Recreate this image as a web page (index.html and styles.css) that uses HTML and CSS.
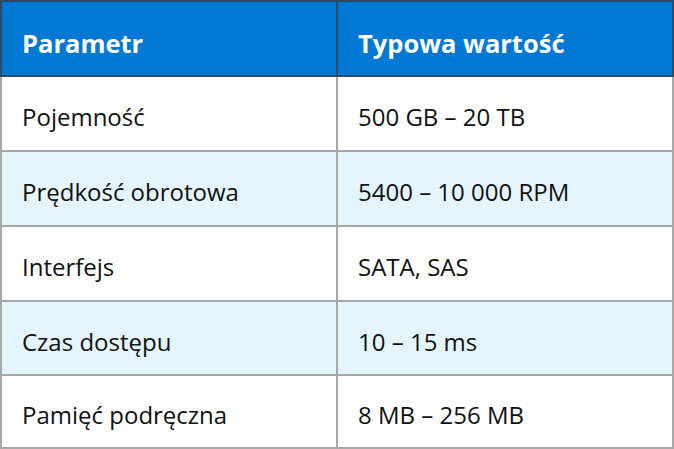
FILE: index.html
```html
<!DOCTYPE html>
<html lang="pl">
<head>
<meta charset="utf-8">
<link rel="stylesheet" href="styles.css">
</head>
<body>
<table class="spec">
  <thead>
    <tr><th>Parametr</th><th>Typowa wartość</th></tr>
  </thead>
  <tbody>
    <tr><td>Pojemność</td><td>500 GB – 20 TB</td></tr>
    <tr class="alt"><td>Prędkość obrotowa</td><td>5400 – 10 000 RPM</td></tr>
    <tr><td>Interfejs</td><td>SATA, SAS</td></tr>
    <tr class="alt short"><td>Czas dostępu</td><td>10 – 15 ms</td></tr>
    <tr class="last"><td>Pamięć podręczna</td><td>8 MB – 256 MB</td></tr>
  </tbody>
</table>
</body>
</html>
```
FILE: styles.css
```css
html, body {
  margin: 0;
  padding: 0;
  background: #ffffff;
}
.spec {
  width: 674px;
  border-collapse: collapse;
  font-family: "Open Sans", "Noto Sans", sans-serif;
  color: #111111;
  table-layout: fixed;
}
.spec th, .spec td {
  text-align: left;
  padding: 0 0 0 20px;
  height: 75px;
  box-sizing: border-box;
  vertical-align: middle;
}
.spec th {
  background: #0078d4;
  color: #ffffff;
  font-size: 25.5px;
  font-weight: 700;
  border: 2px solid #2b4a68;
  padding-top: 8px;
}
.spec td {
  font-size: 24px;
  font-weight: 400;
  border: 2px solid #a8a8a8;
  padding-top: 6px;
}
.spec tr.short td {
  height: 74px;
}
.spec tr.last td {
  height: 73px;
}
.spec tr.alt td {
  background: #e4f5fd;
}
```
